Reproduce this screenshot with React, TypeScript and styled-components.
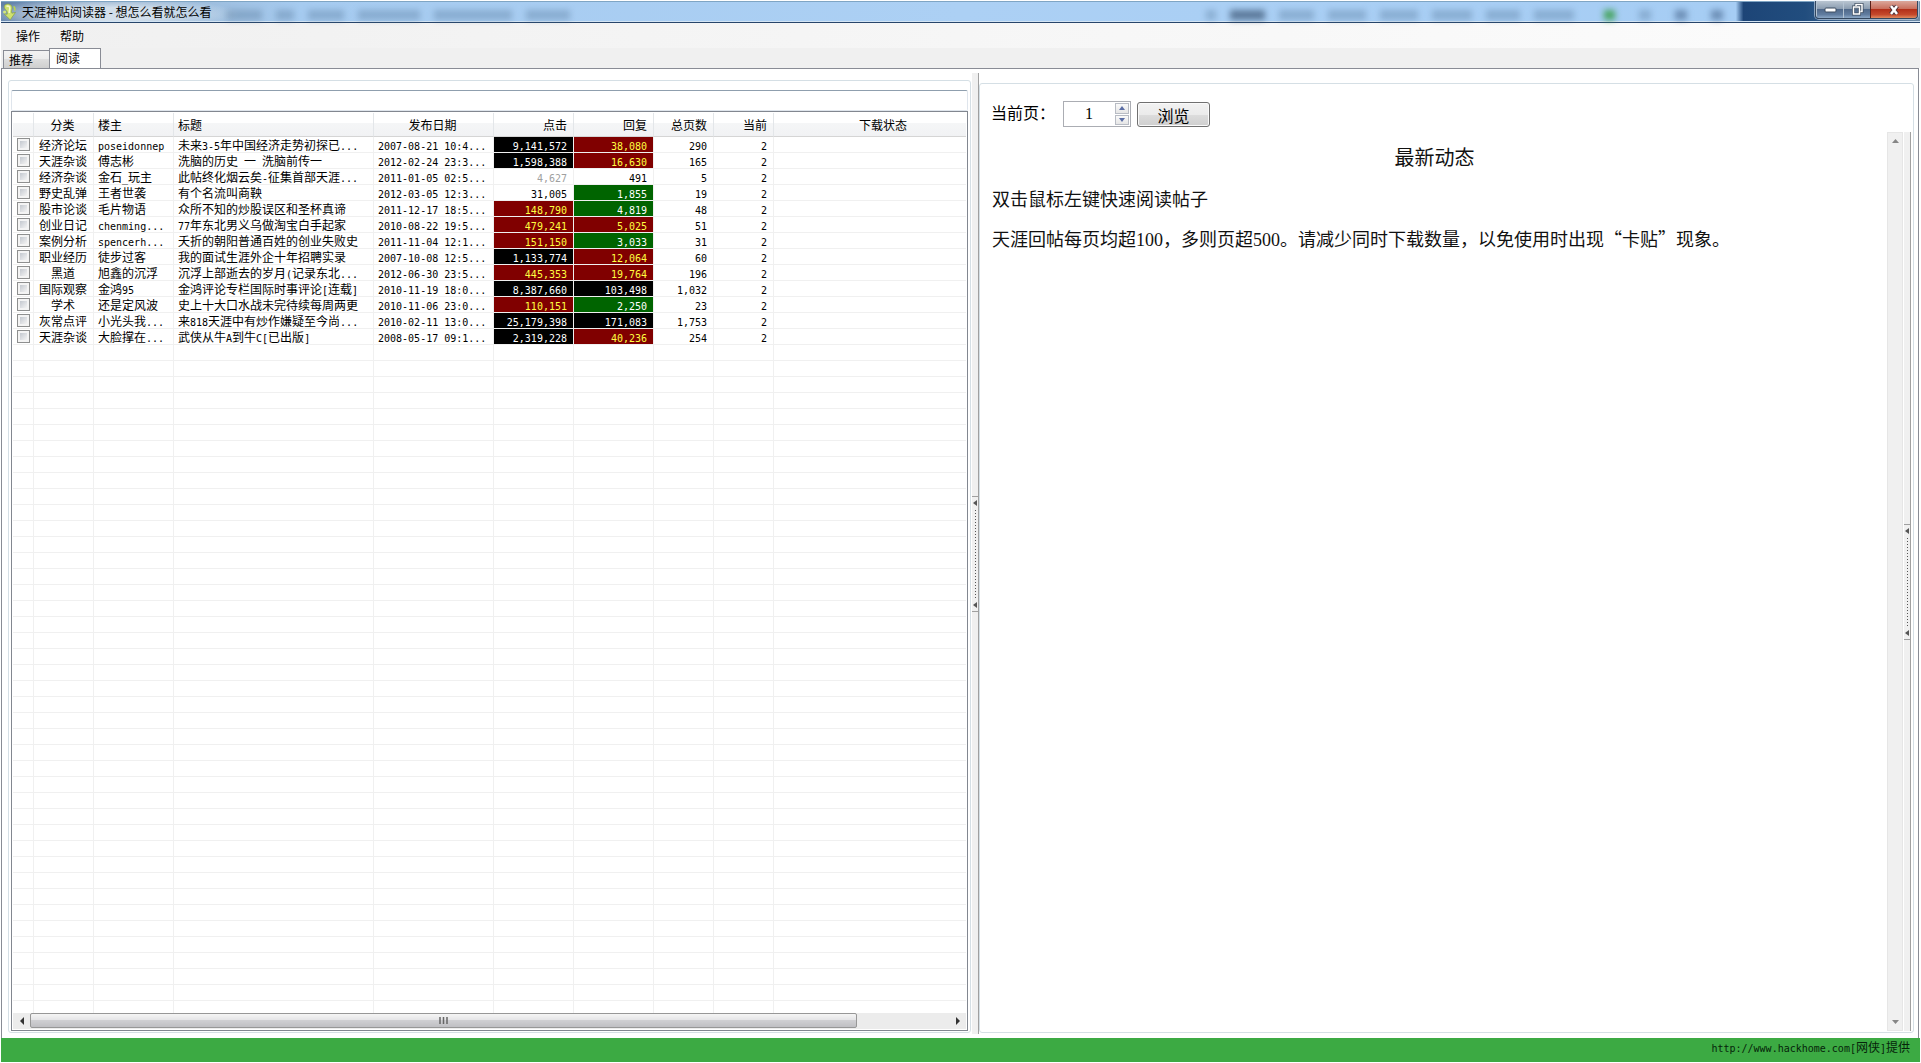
import React, { useState } from "react";
import styled, { createGlobalStyle, css } from "styled-components";

const cjk = `"Noto Sans CJK SC", sans-serif`;
const mono = `"DejaVu Sans Mono", "Noto Sans CJK SC", monospace`;

const GlobalStyle = createGlobalStyle`
  *, *::before, *::after { box-sizing: border-box; }
  body { margin: 0; background: #fff; color: #000; font: 12px/16px ${cjk}; }
  button, input { font: inherit; color: inherit; margin: 0; padding: 0; }
`;

const Window = styled.div`
  display: flex;
  flex-direction: column;
  height: 100vh;
  padding: 1px;
  overflow: hidden;
`;

/* ---------- title bar ---------- */

const TitleBar = styled.header`
  display: flex;
  align-items: center;
  flex: none;
  height: 22px;
  padding-left: 1px;
  border-bottom: 1px solid #27456b;
  box-shadow: inset 0 1px 0 #7fa5c4, inset 0 -1px 0 #d3e4f3;
  background:
    radial-gradient(ellipse 130px 16px at 110px 13px, rgba(222, 232, 240, 0.85) 40%, rgba(222, 232, 240, 0) 100%),
    linear-gradient(90deg, #5f7fa8 0, #86a3c3 70px, #9dbddd 200px, #a6cbf0 300px, #acd0f4 50%, #a6cdf4 90%, #a6cdf4 90.4%, #1d4577 90.8%, #214d7e 94%, #6f8ca8 100%);
`;

const AppTitle = styled.h1`
  flex: none;
  margin: 0 0 0 4px;
  font: 12px/18px ${cjk};
`;

const Ghosts = styled.div`
  display: flex;
  flex: 1;
  align-items: center;
  gap: 14px;
  padding: 6px 92px 0 14px;
  filter: blur(3px);
`;

const Ghost = styled.i<{ $w: number; $tone?: string; $lead?: string }>`
  width: ${(p) => p.$w}px;
  height: 10px;
  background: ${(p) => p.$tone || "rgba(70, 105, 140, 0.32)"};
  margin-left: ${(p) => p.$lead || "0"};
`;

const Caption = styled.div`
  display: flex;
  align-self: flex-start;
  height: 18px;
  margin-right: 2px;
  border: 1px solid #33475f;
  border-top: 0;
  border-radius: 0 0 4px 4px;
  box-shadow: 0 0 0 1px rgba(220, 232, 244, 0.55);
  overflow: hidden;
`;

const CaptionButton = styled.button<{ $close?: boolean }>`
  display: flex;
  align-items: center;
  justify-content: center;
  width: ${(p) => (p.$close ? 47 : 27)}px;
  border: 0;
  border-left: 1px solid ${(p) => (p.$close ? "#5a2019" : "#b4c3d2")};
  background: ${(p) =>
    p.$close
      ? "linear-gradient(#dba79b 0, #c9705e 45%, #b3301a 50%, #c5492c 80%, #e08a5f 100%)"
      : "linear-gradient(#b9c5d1 0, #8b9db1 45%, #50698a 50%, #617da0 80%, #8ba7c6 100%)"};
`;

/* ---------- menu and tabs ---------- */

const MenuBar = styled.nav`
  display: flex;
  flex: none;
  gap: 20px;
  height: 25px;
  padding-left: 15px;
  background: linear-gradient(90deg, #f0f0f0, #fcfcfc);
`;

const MenuItem = styled.button`
  border: 0;
  background: none;
`;

const TabStrip = styled.div`
  display: flex;
  flex: none;
  align-items: flex-end;
  height: 20px;
  padding-left: 2px;
  background: #f0f0f0;
`;

const Tab = styled.button<{ $active?: boolean }>`
  border: 1px solid #898c95;
  border-bottom: 0;
  text-align: left;
  line-height: 16px;
  ${(p) =>
    p.$active
      ? css`width: 52px; height: 20px; padding: 0 6px 2px; background: #fff;`
      : css`width: 46px; height: 18px; padding: 0 5px; border-right: 0; background: linear-gradient(#f2f2f2 0, #ebebeb 50%, #dddddd 50%, #cfcfcf 100%);`}
`;

const Page = styled.main`
  display: grid;
  flex: 1;
  min-height: 0;
  grid-template-columns: 963fr 8px 935fr;
  grid-template-rows: minmax(0, 1fr);
  margin-right: 1px;
  padding: 4px 4px 4px 6px;
  border: 1px solid #898c95;
  border-bottom: 0;
`;

const Group = styled.section<{ $top: number; $pad: string }>`
  display: flex;
  flex-direction: column;
  min-width: 0;
  margin: ${(p) => p.$top}px 0 1px;
  padding: ${(p) => p.$pad};
  border: 1px solid #d5dfe5;
  border-radius: 3px;
`;

/* ---------- splitter ---------- */

const SplitterBar = styled.div`
  display: flex;
  flex: none;
  flex-direction: column;
  justify-content: center;
  width: 7px;
  margin-left: 1px;
  background: #f0f0f0;
  border-right: 1px solid #a0a0a0;
`;

const SplitterGrip = styled.button`
  display: flex;
  flex-direction: column;
  align-items: center;
  justify-content: space-between;
  width: 6px;
  height: 116px;
  padding: 3px 0;
  border: solid #a0a0a0;
  border-width: 1px 0;
  background: #f0f0f0;
`;

const Dots = styled.i`
  width: 1px;
  height: 88px;
  background: repeating-linear-gradient(#555 0 1px, transparent 1px 3px);
`;

const Splitter = () => (
  <SplitterBar>
    <SplitterGrip aria-label="折叠面板">
      <svg width="4" height="6" viewBox="0 0 4 6"><path d="M4 0v6L0 3z" fill="#555" /></svg>
      <Dots />
      <svg width="4" height="6" viewBox="0 0 4 6"><path d="M4 0v6L0 3z" fill="#555" /></svg>
    </SplitterGrip>
  </SplitterBar>
);

/* ---------- thread list ---------- */

const FilterBox = styled.input`
  flex: none;
  height: 21px;
  padding: 0 4px;
  border: 1px solid #dfe5ec;
  border-top-color: #8f9fae;
  border-radius: 2px;
  outline: 0;
`;

const ListFrame = styled.div`
  display: flex;
  flex: 1;
  flex-direction: column;
  min-height: 0;
  padding: 1px;
  border: 1px solid #828790;
`;

const Viewport = styled.div`
  flex: 1;
  min-height: 0;
  overflow: hidden;
`;

const Table = styled.table`
  min-width: 100%;
  width: 981px;
  table-layout: fixed;
  border-collapse: separate;
  border-spacing: 0;
`;

type Align = "left" | "center" | "right";

const Th = styled.th<{ $align: Align }>`
  height: 24px;
  padding: 0 6px 0 4px;
  font-weight: 400;
  text-align: ${(p) => p.$align};
  border-right: 1px solid #e3e6e9;
  border-bottom: 1px solid #d5d5d5;
  background: linear-gradient(#fff 0, #fff 45%, #f5f6f7 45%, #f1f2f4 100%);
  white-space: nowrap;
  &:last-child { border-right: 0; }
`;

type Tone = "plain" | "faint" | "black" | "red" | "green";
const tones: Record<Tone, [string, string]> = {
  plain: ["transparent", "#000"],
  faint: ["transparent", "#a0a0a0"],
  black: ["#000", "#fff"],
  red: ["#800000", "#ffff40"],
  green: ["#006400", "#fff"],
};

const Td = styled.td<{ $align?: Align; $tone?: Tone }>`
  height: 16px;
  padding: 0 6px 0 4px;
  line-height: 15px;
  text-align: ${(p) => p.$align || "left"};
  border-right: 1px solid #f0f0f0;
  border-bottom: 1px solid #f0f0f0;
  background: ${(p) => tones[p.$tone || "plain"][0]};
  color: ${(p) => tones[p.$tone || "plain"][1]};
  white-space: nowrap;
  &:first-child { padding: 0; text-align: center; }
  &:nth-child(2), &:nth-child(4) { padding-right: 5px; }
  &:nth-child(4) { padding-right: 0; }
  &:last-child { border-right: 0; }
`;

const Latin = styled.span`
  font-family: ${mono};
  font-size: 10px;
  line-height: 0;
`;

const Check = styled.input`
  appearance: none;
  display: block;
  width: 13px;
  height: 13px;
  margin: 0 auto;
  border: 1px solid #8e8f8f;
  background: linear-gradient(135deg, #c3c8cf, #f4f4f4) content-box, #f4f4f4;
  padding: 2px;
`;

/* Half-width characters sit on a 6px grid beside the 12px ideographs. */
const Mixed = ({ text }: { text: string }) => (
  <>
    {text.split(/([\x20-\x7e]+)/).map((run, i) =>
      i % 2 ? <Latin key={i}>{run}</Latin> : run
    )}
  </>
);

/* ---------- scroll bars ---------- */

const HBar = styled.div`
  display: flex;
  flex: none;
  height: 16px;
  background: #ececec;
`;

const VBar = styled.div`
  display: flex;
  flex: none;
  flex-direction: column;
  justify-content: space-between;
  width: 16px;
  background: #f0f0f0;
  border: 1px solid #e6e6e6;
`;

const ArrowButton = styled.button`
  display: flex;
  flex: none;
  align-items: center;
  justify-content: center;
  width: 17px;
  height: 16px;
  border: 0;
  background: none;
  ${VBar} & { width: 14px; }
`;

const Track = styled.div`
  flex: 1;
`;

const Thumb = styled.div`
  display: flex;
  align-items: center;
  justify-content: center;
  width: 90%;
  height: 15px;
  border: 1px solid #979797;
  border-radius: 2px;
  background: linear-gradient(#f5f5f5 0, #e4e4e6 48%, #cfcfd2 50%, #bfbfc3 100%);
`;

/* ---------- reader ---------- */

const Toolbar = styled.div`
  display: flex;
  flex: none;
  align-items: flex-end;
  height: 48px;
  padding: 16px 11px 5px;
  font-size: 16px;
`;

const PageLabel = styled.label`
  align-self: flex-start;
  width: 72px;
  line-height: 24px;
`;

const Spinner = styled.div`
  display: flex;
  width: 68px;
  height: 26px;
  margin-right: 6px;
  border: 1px solid #abadb3;
`;

const PageInput = styled.input`
  flex: 1;
  min-width: 0;
  border: 0;
  outline: 0;
  text-align: center;
  font: 16px/20px "Liberation Serif", ${cjk};
`;

const Steps = styled.div`
  display: flex;
  flex-direction: column;
  gap: 1px;
  padding: 1px;
`;

const Step = styled.button`
  display: flex;
  flex: 1;
  align-items: center;
  justify-content: center;
  width: 14px;
  border: 1px solid #b8bcc4;
  background: linear-gradient(#fafafa, #e6e6e6);
`;

const BrowseButton = styled.button`
  width: 73px;
  height: 25px;
  line-height: 22px;
  border: 1px solid #707070;
  border-radius: 3px;
  box-shadow: inset 0 0 0 1px #fafafa;
  background: linear-gradient(#f2f2f2 0, #ebebeb 50%, #dddddd 50%, #cfcfcf 100%);
`;

const Reader = styled.div`
  display: flex;
  flex: 1;
  min-height: 0;
`;

const Article = styled.article`
  flex: 1;
  min-width: 0;
  padding: 12px 0 0 12px;
  font-size: 18px;
  line-height: 24px;
  color: #111;
`;

const Heading = styled.h2`
  margin: 0;
  padding-right: 10px;
  text-align: center;
  font-size: 20px;
  font-weight: 400;
  line-height: 26px;
`;

const Para = styled.p`
  margin: 16px 0;
`;

const Figures = styled.span`
  font-family: "Liberation Serif", serif;
`;

const Footer = styled.footer`
  flex: none;
  height: 24px;
  padding-right: 10px;
  text-align: right;
  line-height: 18px;
  background: #3caa43;
`;

const Credit = styled.a`
  color: #06240a;
  text-decoration: none;
`;

/* ---------- data ---------- */

const columns: { name: string; align: Align; width?: number }[] = [
  { name: "", align: "center", width: 21 },
  { name: "分类", align: "center", width: 60 },
  { name: "楼主", align: "left", width: 80 },
  { name: "标题", align: "left", width: 200 },
  { name: "发布日期", align: "center", width: 120 },
  { name: "点击", align: "right", width: 80 },
  { name: "回复", align: "right", width: 80 },
  { name: "总页数", align: "right", width: 60 },
  { name: "当前", align: "right", width: 60 },
  { name: "下载状态", align: "center" },
];

type Thread = [string, string, string, string, string, Tone, string, Tone, string];

const threads: Thread[] = [
  ["经济论坛", "poseidonnep", "未来3-5年中国经济走势初探已...", "2007-08-21 10:4...", "9,141,572", "black", "38,080", "red", "290"],
  ["天涯杂谈", "傅志彬", "洗脑的历史 一 洗脑前传一", "2012-02-24 23:3...", "1,598,388", "black", "16,630", "red", "165"],
  ["经济杂谈", "金石_玩主", "此帖终化烟云矣-征集首部天涯...", "2011-01-05 02:5...", "4,627", "faint", "491", "plain", "5"],
  ["野史乱弹", "王者世袭", "有个名流叫商鞅", "2012-03-05 12:3...", "31,005", "plain", "1,855", "green", "19"],
  ["股市论谈", "毛片物语", "众所不知的炒股误区和圣杯真谛", "2011-12-17 18:5...", "148,790", "red", "4,819", "green", "48"],
  ["创业日记", "chenming...", "77年东北男义乌做淘宝白手起家", "2010-08-22 19:5...", "479,241", "red", "5,025", "red", "51"],
  ["案例分析", "spencerh...", "夭折的朝阳普通百姓的创业失败史", "2011-11-04 12:1...", "151,150", "red", "3,033", "green", "31"],
  ["职业经历", "徒步过客", "我的面试生涯外企十年招聘实录", "2007-10-08 12:5...", "1,133,774", "black", "12,064", "red", "60"],
  ["黑道", "旭鑫的沉浮", "沉浮上部逝去的岁月(记录东北...", "2012-06-30 23:5...", "445,353", "red", "19,764", "red", "196"],
  ["国际观察", "金鸿95", "金鸿评论专栏国际时事评论[连载]", "2010-11-19 18:0...", "8,387,660", "black", "103,498", "black", "1,032"],
  ["学术", "还是定风波", "史上十大口水战未完待续每周两更", "2010-11-06 23:0...", "110,151", "red", "2,250", "green", "23"],
  ["灰常点评", "小光头我...", "来818天涯中有炒作嫌疑至今尚...", "2010-02-11 13:0...", "25,179,398", "black", "171,083", "black", "1,753"],
  ["天涯杂谈", "大脸撑在...", "武侠从牛A到牛C[已出版]", "2008-05-17 09:1...", "2,319,228", "black", "40,236", "red", "254"],
];

const BLANK_ROWS = 42;

const ThreadTable = () => (
  <Table>
    <colgroup>
      {columns.map((c, i) => <col key={i} width={c.width} />)}
    </colgroup>
    <thead>
      <tr>{columns.map((c, i) => <Th key={i} $align={c.align}>{c.name}</Th>)}</tr>
    </thead>
    <tbody>
      {threads.map(([kind, author, title, date, hits, hitTone, replies, replyTone, pages], i) => (
        <tr key={i}>
          <Td><Check type="checkbox" aria-label={title} /></Td>
          <Td $align="center">{kind}</Td>
          <Td><Mixed text={author} /></Td>
          <Td><Mixed text={title} /></Td>
          <Td><Mixed text={date} /></Td>
          <Td $align="right" $tone={hitTone}><Mixed text={hits} /></Td>
          <Td $align="right" $tone={replyTone}><Mixed text={replies} /></Td>
          <Td $align="right"><Mixed text={pages} /></Td>
          <Td $align="right"><Mixed text="2" /></Td>
          <Td />
        </tr>
      ))}
      {Array.from({ length: BLANK_ROWS }, (_, i) => (
        <tr key={`blank-${i}`}>{columns.map((_, j) => <Td key={j} />)}</tr>
      ))}
    </tbody>
  </Table>
);

const Logo = () => (
  <svg width="16" height="18" viewBox="0 0 16 18" aria-hidden="true">
    <path d="M3.200 1.800C5.500.300 9 1 9.800 3.500c.6 2-.3 3.300-.3 5.200l.4 1.500 3.600-.8-5.300 7.400L2.200 11l3 .2c.3-1.300.1-2.300-.6-3.300C3 6.500 1.200 3.800 3.200 1.800z" fill="#cfe26f" stroke="#87a045" strokeWidth=".7" />
    <path d="M4.500 3.500c1.800-1 3.400 0 3.300 1.800-.1 1.700-.8 2.700-.5 4.700" fill="none" stroke="#f4f8cc" strokeWidth="1.500" />
    <circle cx="2.600" cy="9" r="1.600" fill="#d3e77b" />
    <path d="M11.500 3.500c1.500.8 1.800 2.600.9 4.200" fill="none" stroke="#b7d24f" strokeWidth="1.600" />
  </svg>
);

export default function App() {
  const [page, setPage] = useState(1);
  return (
    <Window>
      <GlobalStyle />
      <TitleBar>
        <Logo />
        <AppTitle>天涯神贴阅读器 - 想怎么看就怎么看</AppTitle>
        <Ghosts aria-hidden="true">
          <Ghost $w={36} />
          <Ghost $w={18} />
          <Ghost $w={36} />
          <Ghost $w={62} />
          <Ghost $w={78} />
          <Ghost $w={44} />
          <Ghost $lead="auto" $w={10} />
          <Ghost $w={35} $tone="rgba(40, 65, 95, 0.6)" />
          <Ghost $w={35} />
          <Ghost $w={38} />
          <Ghost $w={38} />
          <Ghost $w={40} />
          <Ghost $w={34} />
          <Ghost $w={40} />
          <Ghost $lead="16px" $w={11} $tone="rgba(60, 160, 80, 0.9)" />
          <Ghost $lead="10px" $w={12} />
          <Ghost $lead="10px" $w={12} $tone="rgba(50, 80, 120, 0.5)" />
          <Ghost $lead="10px" $w={12} $tone="rgba(50, 80, 120, 0.5)" />
        </Ghosts>
        <Caption>
          <CaptionButton aria-label="最小化">
            <svg width="13" height="7" viewBox="0 0 13 7"><rect x="1" y="2" width="11" height="4" rx="1" fill="#fff" stroke="#3d4d60" /></svg>
          </CaptionButton>
          <CaptionButton aria-label="还原">
            <svg width="13" height="13" viewBox="0 0 13 13" fill="none">
              <path d="M5 3.500v-2h6v7H9M2.500 4H8.500v7h-6z" stroke="#3d4d60" strokeWidth="3" />
              <path d="M5 3v-1.500h6v7H9.500M2.500 4H8.500v7h-6z" stroke="#fff" strokeWidth="1.500" />
            </svg>
          </CaptionButton>
          <CaptionButton aria-label="关闭" $close>
            <svg width="14" height="12" viewBox="0 0 14 12" fill="none">
              <path d="M4 2l6 8M10 2l-6 8" stroke="#4b3038" strokeWidth="4.500" />
              <path d="M4 2l6 8M10 2l-6 8" stroke="#fff" strokeWidth="2.500" />
            </svg>
          </CaptionButton>
        </Caption>
      </TitleBar>

      <MenuBar>
        <MenuItem>操作</MenuItem>
        <MenuItem>帮助</MenuItem>
      </MenuBar>

      <TabStrip role="tablist">
        <Tab role="tab">推荐</Tab>
        <Tab role="tab" aria-selected="true" $active>阅读</Tab>
      </TabStrip>

      <Page>
        <Group $top={7} $pad="9px 2px 1px">
          <FilterBox aria-label="筛选" />
          <ListFrame>
            <Viewport><ThreadTable /></Viewport>
            <HBar>
              <ArrowButton aria-label="向左滚动">
                <svg width="4" height="8" viewBox="0 0 4 8"><path d="M4 0v8L0 4z" fill="#333" /></svg>
              </ArrowButton>
              <Track>
                <Thumb>
                  <svg width="9" height="7" viewBox="0 0 9 7"><path d="M1 0v7M4.500 0v7M8 0v7" stroke="#666" strokeWidth="1.500" /></svg>
                </Thumb>
              </Track>
              <ArrowButton aria-label="向右滚动">
                <svg width="4" height="8" viewBox="0 0 4 8"><path d="M0 0v8l4-4z" fill="#333" /></svg>
              </ArrowButton>
            </HBar>
          </ListFrame>
        </Group>

        <Splitter />

        <Group $top={10} $pad="0 2px 1px 0">
          <Toolbar>
            <PageLabel htmlFor="page">当前页：</PageLabel>
            <Spinner>
              <PageInput
                id="page"
                inputMode="numeric"
                value={page}
                onChange={(e) => setPage(Number(e.target.value) || 1)}
              />
              <Steps>
                <Step aria-label="下一页" onClick={() => setPage(page + 1)}>
                  <svg width="6" height="4" viewBox="0 0 6 4"><path d="M0 4h6L3 0z" fill="#5b6ea5" /></svg>
                </Step>
                <Step aria-label="上一页" onClick={() => setPage(Math.max(1, page - 1))}>
                  <svg width="6" height="4" viewBox="0 0 6 4"><path d="M0 0h6L3 4z" fill="#5b6ea5" /></svg>
                </Step>
              </Steps>
            </Spinner>
            <BrowseButton>浏览</BrowseButton>
          </Toolbar>
          <Reader>
            <Article>
              <Heading>最新动态</Heading>
              <Para>双击鼠标左键快速阅读帖子</Para>
              <Para>
                天涯回帖每页均超<Figures>100</Figures>，多则页超<Figures>500</Figures>。请减少同时下载数量，以免使用时出现“卡贴”现象。
              </Para>
            </Article>
            <VBar>
              <ArrowButton aria-label="向上滚动">
                <svg width="7" height="4" viewBox="0 0 7 4"><path d="M0 4h7L3.500 0z" fill="#868686" /></svg>
              </ArrowButton>
              <ArrowButton aria-label="向下滚动">
                <svg width="7" height="4" viewBox="0 0 7 4"><path d="M0 0h7L3.500 4z" fill="#868686" /></svg>
              </ArrowButton>
            </VBar>
            <Splitter />
          </Reader>
        </Group>
      </Page>

      <Footer>
        <Credit href="http://www.hackhome.com"><Mixed text="http://www.hackhome.com[网侠]提供" /></Credit>
      </Footer>
    </Window>
  );
}
